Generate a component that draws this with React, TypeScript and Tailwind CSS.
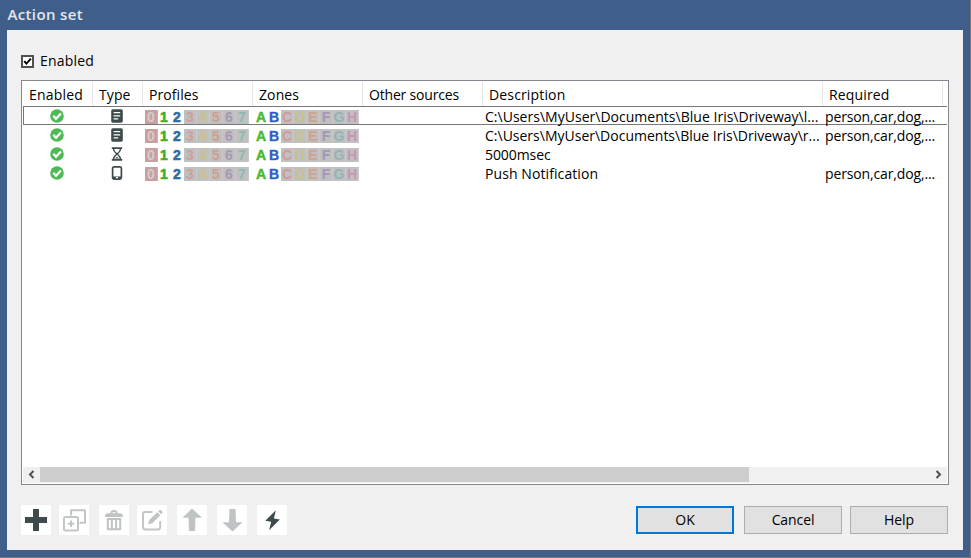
import React from "react";

const UI = "font-['Open_Sans','Noto_Sans',sans-serif]";

const profiles = [
  { c: "0", s: "bg-[#c9a0a0] text-[#d3cccc]" },
  { c: "1", s: "bg-white text-[#3fae29] [-webkit-text-stroke:0.6px_#3fae29]" },
  { c: "2", s: "bg-white text-[#2f6ca3] [-webkit-text-stroke:0.6px_#2f6ca3]" },
  { c: "3", s: "bg-[#c0c0c0] text-[#cd9f9f]" },
  { c: "4", s: "bg-[#c0c0c0] text-[#cac28c]" },
  { c: "5", s: "bg-[#c0c0c0] text-[#cf9f8c]" },
  { c: "6", s: "bg-[#c0c0c0] text-[#ab97b3]" },
  { c: "7", s: "bg-[#c0c0c0] text-[#8dbab4]" },
];

const zones = [
  { c: "A", s: "bg-white text-[#4cc02c] [-webkit-text-stroke:0.4px_#3aa81f]" },
  { c: "B", s: "bg-white text-[#2d5fca] [-webkit-text-stroke:0.4px_#2d5fca]" },
  { c: "C", s: "bg-[#c0c0c0] text-[#d19a9a]" },
  { c: "D", s: "bg-[#c0c0c0] text-[#cac08f]" },
  { c: "E", s: "bg-[#c0c0c0] text-[#cfa48c]" },
  { c: "F", s: "bg-[#c0c0c0] text-[#a596b6]" },
  { c: "G", s: "bg-[#c0c0c0] text-[#92b3b7]" },
  { c: "H", s: "bg-[#c0c0c0] text-[#c696b4]" },
];

function Strip({ items }: { items: { c: string; s: string }[] }) {
  return (
    <div className="mt-[4px] flex h-[14px] w-[104px]">
      {items.map((i) => (
        <span
          key={i.c}
          className={`flex h-[14px] w-[13px] items-center justify-center border-r border-white/15 pt-[1px] font-['Liberation_Sans',sans-serif] text-[14px] leading-[13px] font-bold ${i.s}`}
        >
          {i.c}
        </span>
      ))}
    </div>
  );
}

function Check() {
  return (
    <svg className="mt-[3px] h-[14px] w-[14px]" viewBox="0 0 14 14">
      <circle cx="7" cy="7" r="6.8" fill="#4dbb53" />
      <path d="M3.3 6.8l2.7 2.9 4.9-5.2" fill="none" stroke="#fff" strokeWidth="2.3" />
    </svg>
  );
}

function TypeIcon({ kind }: { kind: string }) {
  return (
    <svg className="mt-[3px] h-[14px] w-[14px]" viewBox="0 0 14 14" fill="none" stroke="#3e4a4c">
      {kind === "log" && (
        <>
          <rect x="1.2" y="0.3" width="11.6" height="13.4" rx="1.6" fill="#3e4a4c" stroke="none" />
          <path d="M3.6 3.7h6.6M3.6 6.8h6.6M3.6 9.9h4.6" stroke="#fff" strokeWidth="1.3" />
        </>
      )}
      {kind === "wait" && (
        <>
          <path d="M1.8 1.1h10.4M1.8 12.9h10.4" strokeWidth="1.6" />
          <path d="M3.4 1.5c0 3 2 4 3.6 5.5C8.6 5.5 10.6 4.5 10.6 1.5M3.4 12.5c0-3 2-4 3.6-5.5 1.6 1.5 3.6 2.5 3.6 5.5" strokeWidth="1.5" />
          <path d="M5 11.5L7 9.8l2 1.7z" fill="#3e4a4c" stroke="none" />
        </>
      )}
      {kind === "phone" && (
        <>
          <rect x="2.6" y="0.9" width="8.8" height="12.2" rx="1.6" strokeWidth="1.7" />
          <path d="M3 11.6h8" strokeWidth="2.2" />
          <path d="M6 11.6h2" stroke="#fff" strokeWidth="1.2" />
        </>
      )}
    </svg>
  );
}

const rows = [
  { kind: "log", d: "C:\\Users\\MyUser\\Documents\\Blue Iris\\Driveway\\l...", ds: "tracking-[0.02px]", r: "person,car,dog,..." },
  { kind: "log", d: "C:\\Users\\MyUser\\Documents\\Blue Iris\\Driveway\\r...", ds: "tracking-[0px]", r: "person,car,dog,..." },
  { kind: "wait", d: "5000msec", ds: "tracking-[-0.08px]", r: "" },
  { kind: "phone", d: "Push Notification", ds: "tracking-[0.09px]", r: "person,car,dog,..." },
];

const heads = [
  { t: "Enabled", s: "w-[70px] tracking-[0.2px]" },
  { t: "Type", s: "w-[50px] tracking-[0.1px]" },
  { t: "Profiles", s: "w-[110px] tracking-[0.08px]" },
  { t: "Zones", s: "w-[110px] tracking-[0.1px]" },
  { t: "Other sources", s: "w-[120px] tracking-[-0.18px]" },
  { t: "Description", s: "w-[340px] tracking-[0.15px]" },
  { t: "Required", s: "w-[120px] tracking-[0.15px]" },
];

function Tool({ children, gap }: { children: React.ReactNode; gap: string }) {
  return (
    <button className={`h-[30px] w-[30px] shrink-0 bg-white ${gap}`}>
      <svg className="h-[30px] w-[30px]" viewBox="0 0 30 30" fill="none">
        {children}
      </svg>
    </button>
  );
}

export default function App() {
  return (
    <div className={`h-[558px] w-[971px] overflow-hidden border-r border-b border-[#77797a] bg-[#3f5f8a] text-[14px] text-black ${UI}`}>
      <div className="h-[30px] pl-[7.5px] text-[15px] leading-[28px] font-semibold text-[#e3e6ea]">
        <span className="tracking-[0.35px]">Action set</span>
      </div>
      <div className="ml-[7px] flex h-[520px] w-[956px] flex-col bg-[#f0f0f0] pl-[14px]">
        <div className="mt-[20px] flex h-[22px] items-center">
          <span className="flex h-[13px] w-[13px] items-center justify-center border-2 border-[#505050] bg-white">
            <svg className="h-[9px] w-[9px]" viewBox="0 0 9 9">
              <path d="M1.2 4.2l2.2 2.4L7.9 1.7" fill="none" stroke="#000" strokeWidth="1.9" />
            </svg>
          </span>
          <span className="ml-[6px] leading-[22px] tracking-[0.2px]">Enabled</span>
        </div>

        <div className="mt-[8px] flex h-[405px] w-[928px] flex-col border border-[#828790] bg-white pl-[1px]">
          <div className="flex h-[25px] pt-[1px]">
            {heads.map((h) => (
              <div key={h.t} className={`h-[24px] shrink-0 border-r border-[#e5e5e5] pl-[6px] leading-[25px] whitespace-nowrap ${h.s}`}>
                {h.t}
              </div>
            ))}
          </div>
          {rows.map((r, i) => (
            <div key={i} className={`flex h-[19px] w-[924px] shrink-0 ${i === 0 ? "shadow-[inset_1px_1px_#777,inset_0_-1px_#777]" : ""}`}>
              <div className="flex w-[68px] justify-center"><Check /></div>
              <div className="flex w-[54px] pl-[19px]"><TypeIcon kind={r.kind} /></div>
              <div className="w-[110px]"><Strip items={profiles} /></div>
              <div className="w-[230px]"><Strip items={zones} /></div>
              <div className={`w-[340px] leading-[21px] whitespace-nowrap ${r.ds}`}>{r.d}</div>
              <div className="leading-[21px] tracking-[-0.14px] whitespace-nowrap">{r.r}</div>
            </div>
          ))}
          <div className="mt-auto mb-[1px] flex h-[16px] w-[924px] bg-[#f0f0f0]">
            <div className="flex h-[15px] w-[17px] items-center justify-center">
              <svg className="h-[9px] w-[9px]" viewBox="0 0 9 9"><path d="M6.5 1L3 4.5 6.5 8" fill="none" stroke="#505050" strokeWidth="2" /></svg>
            </div>
            <div className="h-[15px] w-[709px] bg-[#cdcdcd]" />
            <div className="ml-auto flex h-[15px] w-[17px] items-center justify-center">
              <svg className="h-[9px] w-[9px]" viewBox="0 0 9 9"><path d="M2.5 1L6 4.5 2.5 8" fill="none" stroke="#505050" strokeWidth="2" /></svg>
            </div>
          </div>
        </div>

        <div className="mt-[20px] flex h-[30px]">
          <Tool gap="">
            <path d="M12 4h6v8h8v6h-8v8h-6v-8H4v-6h8z" fill="#3e4a4c" />
          </Tool>
          <Tool gap="ml-[8px]">
            <path d="M12 10.5V5.2h14v12.6H20.5" stroke="#c3c6c6" strokeWidth="2" strokeLinejoin="round" />
            <rect x="5" y="12" width="14" height="13.5" rx="1.5" stroke="#c3c6c6" strokeWidth="2" />
            <path d="M12 15.5v6.5M8.700 18.700h6.600" stroke="#c3c6c6" strokeWidth="2" />
          </Tool>
          <Tool gap="ml-[10px]">
            <path d="M6 12v-1.200c0-1.600 1.300-2.600 3-2.600h12c1.700 0 3 1 3 2.600V12z" fill="#bfc3c3" />
            <path d="M12.200 8.500c0-3.400 5.600-3.400 5.600 0" stroke="#bfc3c3" strokeWidth="2" />
            <path d="M8.800 14h12.400v10.200H8.800zM12.900 14v10M17.100 14v10" stroke="#bfc3c3" strokeWidth="2" strokeLinejoin="round" />
          </Tool>
          <Tool gap="ml-[8px]">
            <path d="M15.500 7H8.200Q6 7 6 9.200v12.600Q6 24.500 8.200 24.500h12.600q2.400 0 2.400-2.700V16" stroke="#c3c6c6" strokeWidth="2" />
            <path d="M11 19.500l1.500-4.800 7.800-7.400 3 3-7.700 7.700z" fill="#bfc3c3" />
            <path d="M21.200 6.400l1.300-1.200q.8-.6 1.600.1l1.200 1.200q.7.800 0 1.600l-1.200 1.200z" fill="#bfc3c3" />
          </Tool>
          <Tool gap="ml-[10px]">
            <path d="M15 3.500l10 9.300h-6.500l-.5 13.200h-6l-.5-13.200H5.500z" fill="#bfc3c3" />
          </Tool>
          <Tool gap="ml-[10px]">
            <path d="M15.500 26.500l10-9.300H19L18.500 4h-6L12 17.200H5.500z" fill="#bfc3c3" />
          </Tool>
          <Tool gap="ml-[10px]">
            <path d="M18.800 5.300L8.300 15.800l5.900.9-2.100 8.500 10.700-10.600-5.900-1z" fill="#3e4a4c" />
          </Tool>
          <div className="mt-[1px] ml-[349px] flex h-[28px] tracking-[-0.1px]">
            <button className="h-[28px] w-[98px] border-2 border-[#0078d7] bg-[#e1e1e1] leading-[24px]">OK</button>
            <button className="ml-[10px] h-[28px] w-[98px] border border-[#adadad] bg-[#e1e1e1] leading-[26px]">Cancel</button>
            <button className="ml-[8px] h-[28px] w-[98px] border border-[#adadad] bg-[#e1e1e1] leading-[26px]">Help</button>
          </div>
        </div>
      </div>
    </div>
  );
}
